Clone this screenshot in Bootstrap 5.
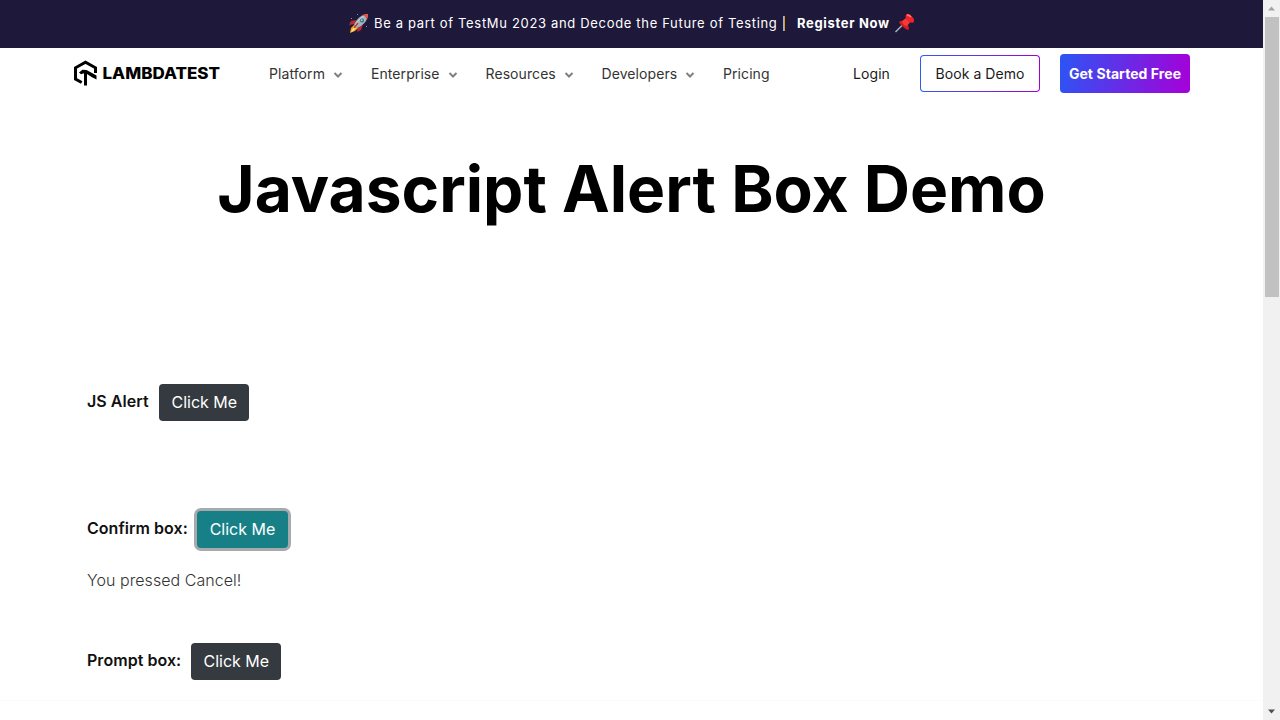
<!DOCTYPE html>
<html lang="en">
<head>
<meta charset="utf-8">
<meta name="viewport" content="width=device-width, initial-scale=1">
<title>Javascript Alert Box Demo</title>
<link href="https://cdn.jsdelivr.net/npm/bootstrap@5.3.0/dist/css/bootstrap.min.css" rel="stylesheet">
<style>
body{font-family:Inter,sans-serif;color:#000;background:#fff}
svg{display:block;flex:none}
.promo{height:48px;background:#1e183a;font-size:13px;letter-spacing:.67px;padding:0 0 2px 349px;line-height:20px}
.promo-text{margin-left:5px;width:403px}
.promo-cta{width:93px}
.promo-line{width:2px;height:15px;background:linear-gradient(90deg,#9fb4d0 50%,#d89a35 50%);margin:0 12px 0 6px}
.pin{margin-left:5px}
.topnav{height:52px;padding-left:74px}
.menu-link{font-size:14px;color:#333;line-height:20px;letter-spacing:.08px}
.m1{width:102px}.m2{width:114.5px}.m3{width:116px}.m4{width:121.5px}.m5{width:130px}
.m-login{width:67px;color:#1b1b1b}
.menu-link svg{margin:1px 0 0 8px}
.btn-demo{width:120px;height:37px;margin-top:-1px;font-size:14px;line-height:20px;color:#1b1b1b;border:1px solid transparent;border-radius:4px;background:linear-gradient(#fff,#fff) padding-box,linear-gradient(90deg,#2c5bf2,#a100d6) border-box;letter-spacing:.05px}
.btn-start{width:130px;height:39px;margin:-1px 0 0 20px;font-size:14px;letter-spacing:.06px;font-weight:700;color:#fff;border:0;border-radius:4px;background:linear-gradient(100deg,#2c55f4,#a600d8)}
.hero-title{font-size:64px;font-weight:700;line-height:80px;margin-top:49px}
.demo{padding-left:87px}
.demo-label{font-size:16px;letter-spacing:.04px;font-weight:600;color:#111;line-height:22px;margin-top:-3px}
.l1{width:72.3px}.l2{width:110px}.l3{width:104.3px}
.btn-click{width:90px;height:37px;font-size:16px;line-height:24px;padding:0 0 1px;color:#fff;background:#343a40;border:0;border-radius:4px}
.g1 .btn-click,.g2 .btn-click{padding-bottom:2px}
.btn-click.active-click{width:91px;background:#178087!important;color:#fff;box-shadow:0 0 0 3px #a7aaad}
.result{font-size:16px;letter-spacing:.05px;font-weight:300;color:#333;line-height:24px}
.g1{margin-top:155px}.g2{margin-top:90px}.g3{margin-top:50.5px}
.page-line{height:1px;margin-bottom:19px;background:#fbfbfb}
.sbar{width:17px;background:#f1f1f1}
.sthumb{width:14px;height:280px;background:#c1c1c1}
</style>
</head>
<body class="vh-100 overflow-hidden d-flex">
<div class="flex-grow-1 d-flex flex-column">
  <div class="promo d-flex align-items-center text-white text-nowrap">
    <svg width="20" height="20" viewBox="0 0 20 20" aria-hidden="true"><path d="M7 7L2 8 0 12l6-1zM9 13l-1 6 4-2 2-6z" fill="#b92d32"/><path d="M5 12l4 3-3 3-5 2 1-5z" fill="#f6a623"/><path d="M5 14l2 1-3 3-2 1z" fill="#fff0a0"/><path d="M5 12C8 5 13 1 19 1c0 6-4 11-11 14z" fill="#9fb5bd"/><path d="M6 13C9 7 13 3 18 2" fill="none" stroke="#c8d5d9"/><path d="M13 2l6-1-1 6q-1-4-5-5z" fill="#ed4934"/><circle cx="13" cy="7.5" r="2" fill="#3f5f72"/><circle cx="12.8" cy="7.3" r="1" fill="#8fd3ee"/><path d="M9 10l-4 5" stroke="#c23631" stroke-width="1.5"/><path d="M8 1h1v1H8zM2 5h1v1H2zM17 13h1v1h-1z" fill="#8a86b0"/></svg>
    <span class="promo-text">Be a part of TestMu 2023 and Decode the Future of Testing</span>
    <span class="promo-line"></span>
    <strong class="promo-cta">Register Now</strong>
    <svg class="pin" width="20" height="20" viewBox="0 0 20 20" aria-hidden="true"><path d="M7.500 12L.5 19" stroke="#a9b4bd" stroke-width="1.400"/><path d="M4 8.500q4-2 9 4 2 3 0 4.500-3-1-6-4-3-3-3-4.500z" fill="#d51b20"/><path d="M6.500 8.500L11 5l4 4.500-3.500 4q-3-1-5-5z" fill="#f43a36"/><path d="M11 1.500q3-2 6 2 3 3 1.500 6-3 1-6-2-3-3-1.500-6z" fill="#ee2427"/><path d="M12 2q2 0 4 2" stroke="#ff8074" stroke-width="1.300" fill="none"/></svg>
  </div>
  <nav class="topnav d-flex align-items-center text-nowrap">
    <svg width="195" height="30" viewBox="0 0 195 30" role="img" aria-label="LambdaTest"><path d="M7.700 23.500L1.500 20V8.800L11.500 3.200 21.500 8.800V14" fill="none" stroke="#000" stroke-width="3"/><path d="M5 13.500L8.500 10.800 12.500 11 22.500 16.500V20.500L18 18.300 13 15V26.500H10V14.200L7 15.300z" fill="#000"/><text x="28.500" y="19.800" font-family="Inter" font-size="15.800" font-weight="800" textLength="117.500" lengthAdjust="spacingAndGlyphs">LAMBDATEST</text></svg>
    <span class="menu-link m1 d-flex align-items-center">Platform<svg width="10" height="8" viewBox="0 0 10 8"><path d="M1.500 2L5 5.500 8.500 2" fill="none" stroke="#808080" stroke-width="2"/></svg></span>
    <span class="menu-link m2 d-flex align-items-center">Enterprise<svg width="10" height="8" viewBox="0 0 10 8"><path d="M1.500 2L5 5.500 8.500 2" fill="none" stroke="#808080" stroke-width="2"/></svg></span>
    <span class="menu-link m3 d-flex align-items-center">Resources<svg width="10" height="8" viewBox="0 0 10 8"><path d="M1.500 2L5 5.500 8.500 2" fill="none" stroke="#808080" stroke-width="2"/></svg></span>
    <span class="menu-link m4 d-flex align-items-center">Developers<svg width="10" height="8" viewBox="0 0 10 8"><path d="M1.500 2L5 5.500 8.500 2" fill="none" stroke="#808080" stroke-width="2"/></svg></span>
    <span class="menu-link m5">Pricing</span>
    <span class="menu-link m-login">Login</span>
    <button class="btn btn-demo p-0">Book a Demo</button>
    <button class="btn btn-start p-0">Get Started Free</button>
  </nav>
  <h1 class="hero-title text-center mb-0">Javascript Alert Box Demo</h1>
  <main class="demo">
    <div class="g1 d-flex align-items-center"><span class="demo-label l1">JS Alert</span><button class="btn btn-click">Click Me</button></div>
    <div class="g2 d-flex align-items-center"><span class="demo-label l2">Confirm box:</span><button class="btn btn-click active-click">Click Me</button></div>
    <p class="result mb-0 mt-3 pt-1">You pressed Cancel!</p>
    <div class="g3 d-flex align-items-center"><span class="demo-label l3">Prompt box:</span><button class="btn btn-click">Click Me</button></div>
  </main>
  <div class="page-line mt-auto"></div>
</div>
<div class="sbar flex-shrink-0 d-flex flex-column align-items-center">
  <svg width="17" height="17" viewBox="0 0 17 17"><path d="M5 10.500L8.500 6.500 12 10.500z" fill="#a3a3a3"/></svg>
  <div class="sthumb"></div>
  <svg class="mt-auto" width="17" height="17" viewBox="0 0 17 17"><path d="M5 6.500L8.500 10.500 12 6.500z" fill="#505050"/></svg>
</div>
</body>
</html>
